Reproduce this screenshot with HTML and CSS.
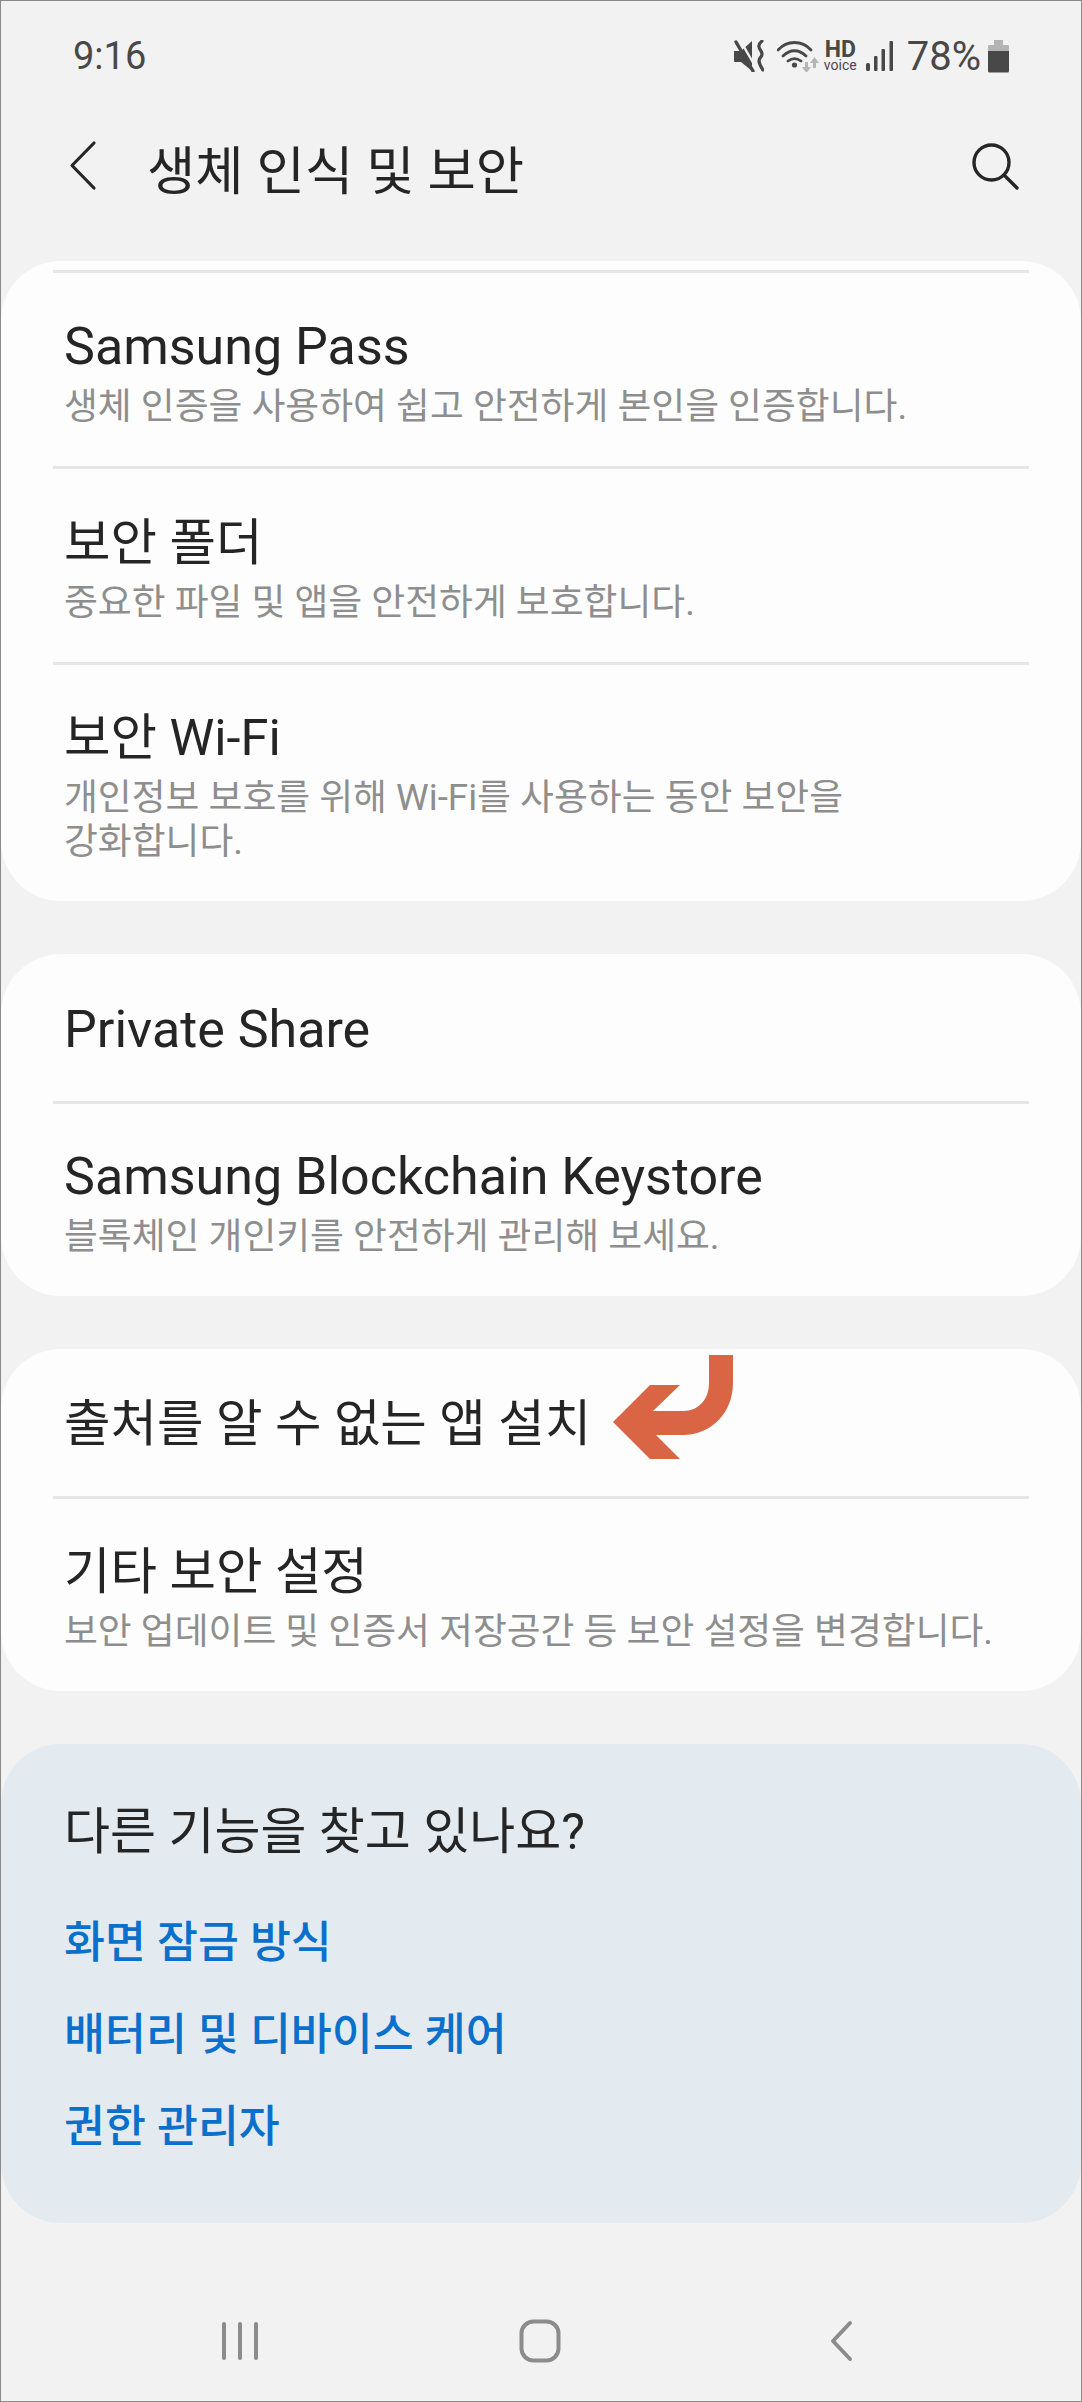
FILE: index.html
```html
<!DOCTYPE html>
<html lang="ko">
<head>
    <meta charset="utf-8">
    <title>생체 인식 및 보안</title>
    <link rel="stylesheet" href="styles.css">
</head>
<body>
    <div class="status-bar">
        <span class="clock">9:16</span>
        <div class="status-icons">
            <svg class="icon-mute" width="30" height="32" viewBox="0 0 30 32">
                <path d="M0 11h7L18 1v30L7 22H1a1 1 0 0 1-1-1z" fill="#484848"/>
                <path d="M6 0l15 26" stroke="#f2f2f2" stroke-width="2.400"/>
                <path d="M2 2l17 29" stroke="#484848" stroke-width="3.400" stroke-linecap="round"/>
                <path d="M28 1c-5 4-3 7-1 10 2 3 1 5-1 7-2 3-1 6 3 12" fill="none" stroke="#484848" stroke-width="3.200" stroke-linecap="round"/>
            </svg>
            <svg class="icon-wifi" width="42" height="32" viewBox="0 0 42 32">
                <path d="M1 10C10 0 25 0 34 10M6 16c7-7 16-7 23 0M11 21c4-3 9-3 13 0" fill="none" stroke="#484848" stroke-width="2.800" stroke-linecap="round"/>
                <circle cx="17.500" cy="25" r="2.600" fill="#484848"/>
                <path d="M25 27h3v-5h3v5h3l-4.500 6z" fill="#b5b5b5"/>
                <path d="M33 23l4.500-6 4.500 6h-3v5h-3v-5z" fill="#b5b5b5"/>
            </svg>
            <div class="hd-voice"><b>HD</b><span>voice</span></div>
            <svg class="icon-signal" width="27" height="30" viewBox="0 0 27 30">
                <g fill="#484848">
                    <rect x="0" y="22" width="4" height="8" rx="1.500"/>
                    <rect x="8" y="15" width="3.500" height="15" rx="1"/>
                    <rect x="15.500" y="8" width="3.500" height="22" rx="1"/>
                    <rect x="23.500" y="0" width="3.500" height="30" rx="1"/>
                </g>
            </svg>
            <span class="battery-text">78%</span>
            <svg class="icon-battery" width="21" height="33" viewBox="0 0 21 33">
                <path d="M6 0h9v5h5a1 1 0 0 1 1 1v6H0V6a1 1 0 0 1 1-1h5z" fill="#b4b4b4"/>
                <path d="M0 11h21v20a1.500 1.500 0 0 1-1.500 1.500h-18A1.500 1.500 0 0 1 0 31z" fill="#484848"/>
            </svg>
        </div>
    </div>

    <div class="app-bar">
        <svg class="back" width="28" height="52" viewBox="0 0 28 52">
            <path d="M25 3L3 25.500 25 48" fill="none" stroke="#262626" stroke-width="3.200" stroke-linecap="round" stroke-linejoin="round"/>
        </svg>
        <h1>생체 인식 및 보안</h1>
        <svg class="search" width="48" height="48" viewBox="0 0 48 48">
            <circle cx="20.500" cy="20.500" r="17.500" fill="none" stroke="#262626" stroke-width="3.400"/>
            <path d="M33 33l13 13" stroke="#262626" stroke-width="3.400" stroke-linecap="round"/>
        </svg>
    </div>

    <div class="card first">
        <div class="row row-pass">
            <div class="title latin">Samsung Pass</div>
            <div class="sub">생체 인증을 사용하여 쉽고 안전하게 본인을 인증합니다.</div>
        </div>
        <div class="row row-folder">
            <div class="title">보안 폴더</div>
            <div class="sub">중요한 파일 및 앱을 안전하게 보호합니다.</div>
        </div>
        <div class="row row-wifi">
            <div class="title">보안 Wi-Fi</div>
            <div class="sub">개인정보 보호를 위해 Wi-Fi를 사용하는 동안 보안을<br>강화합니다.</div>
        </div>
    </div>

    <div class="card">
        <div class="row row-share">
            <div class="title latin">Private Share</div>
        </div>
        <div class="row row-keystore">
            <div class="title latin">Samsung Blockchain Keystore</div>
            <div class="sub">블록체인 개인키를 안전하게 관리해 보세요.</div>
        </div>
    </div>

    <div class="card">
        <div class="row row-unknown">
            <div class="title">출처를 알 수 없는 앱 설치</div>
            <svg class="arrow" width="120" height="104" viewBox="0 0 120 104">
                <path d="M96 0h24v28c0 30-22 52-50 52H43l24 24H37L0 67l37-37h30L40 56h30c16 0 26-12 26-28z" fill="#d96545"/>
            </svg>
        </div>
        <div class="row row-other">
            <div class="title">기타 보안 설정</div>
            <div class="sub">보안 업데이트 및 인증서 저장공간 등 보안 설정을 변경합니다.</div>
        </div>
    </div>

    <div class="card suggest">
        <h2>다른 기능을 찾고 있나요?</h2>
        <a>화면 잠금 방식</a>
        <a>배터리 및 디바이스 케어</a>
        <a>권한 관리자</a>
    </div>

    <div class="nav-bar">
        <svg class="nav-recent" width="40" height="42" viewBox="0 0 40 42">
            <g fill="#8c8c8c">
                <rect x="2" y="2" width="4" height="38" rx="2"/>
                <rect x="18" y="2" width="4" height="38" rx="2"/>
                <rect x="34" y="2" width="4" height="38" rx="2"/>
            </g>
        </svg>
        <svg class="nav-home" width="42" height="44" viewBox="0 0 42 44">
            <rect x="2.500" y="2.500" width="37" height="39" rx="12" fill="none" stroke="#8c8c8c" stroke-width="4"/>
        </svg>
        <svg class="nav-back" width="28" height="42" viewBox="0 0 28 42">
            <path d="M23 3L6 21l17 18" fill="none" stroke="#8c8c8c" stroke-width="4" stroke-linecap="round" stroke-linejoin="round"/>
        </svg>
    </div>
</body>
</html>
```

FILE: styles.css
```css
* {
    box-sizing: border-box;
}
html, body {
    margin: 0;
    padding: 0;
}
body {
    width: 1082px;
    height: 2402px;
    border: 1px solid #8a8a8a;
    background-color: #f2f2f2;
    color: #252525;
    font-family: Roboto, "Noto Sans CJK KR", sans-serif;
    overflow: hidden;
}
.status-bar {
    display: flex;
    justify-content: space-between;
    align-items: center;
    height: 108px;
    padding: 2px 72px 0;
    color: #484848;
}
.clock {
    font-size: 38px;
}
.status-icons {
    display: flex;
    align-items: center;
}
.icon-wifi {
    margin-left: 13px;
}
.hd-voice {
    display: flex;
    flex-direction: column;
    align-items: center;
    width: 33px;
    margin-left: 5px;
    line-height: 1;
}
.hd-voice b {
    font-size: 23px;
    line-height: 18px;
}
.hd-voice span {
    font-size: 14px;
    line-height: 12px;
}
.icon-signal {
    margin-left: 9px;
}
.battery-text {
    margin-left: 14px;
    font-size: 40px;
}
.icon-battery {
    margin-left: 7px;
}
.app-bar {
    display: flex;
    align-items: center;
    height: 114px;
    margin-bottom: 38px;
    padding: 0 62px 0 68px;
}
.app-bar h1 {
    flex: 1;
    margin: 0 0 0 50px;
    padding-top: 2px;
    font-size: 52.500px;
    font-weight: 400;
}
.card {
    position: relative;
    margin-bottom: 53px;
    background-color: #fdfdfd;
    border-radius: 60px;
}
.first {
    padding-top: 9px;
}
.row {
    position: relative;
    display: flex;
    flex-direction: column;
    justify-content: center;
    padding: 9px 63px 0;
}
.row::before {
    content: "";
    position: absolute;
    top: 0;
    left: 52px;
    right: 52px;
    height: 3px;
    background-color: #e6e6e6;
}
.card:not(.first) .row:first-child::before {
    display: none;
}
.title {
    font-size: 50.500px;
    line-height: 60px;
}
.latin {
    font-size: 52px;
}
.sub {
    margin-top: 8px;
    font-size: 36.800px;
    line-height: 44px;
    color: #8e8e8e;
}
.row-pass { height: 196px; }
.row-folder { height: 196px; }
.row-wifi { height: 239px; }
.row-share { height: 147px; padding-top: 5px; }
.row-keystore { height: 195px; }
.row-unknown { height: 147px; padding-top: 3px; }
.row-other { height: 195px; }
.arrow {
    position: absolute;
    left: 612px;
    top: 6px;
}
.suggest {
    display: flex;
    flex-direction: column;
    align-items: flex-start;
    height: 479px;
    margin-bottom: 0;
    padding: 58px 63px 0;
    background-color: #e3ebf1;
}
.suggest h2 {
    margin: 0 0 35px;
    font-size: 50px;
    font-weight: 400;
    line-height: 60px;
}
.suggest a {
    height: 92px;
    font-size: 44.500px;
    font-weight: 500;
    line-height: 92px;
    color: #0a70cb;
}
.nav-bar {
    display: flex;
    align-items: center;
    height: 177px;
    padding: 58px 0 0 219px;
}
.nav-home {
    margin-left: 259px;
}
.nav-back {
    margin-left: 266px;
}
```
